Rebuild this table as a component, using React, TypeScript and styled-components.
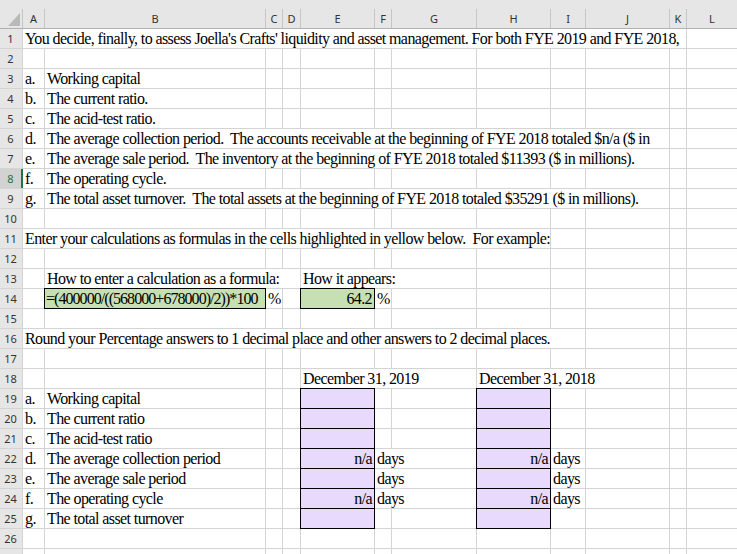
import React from "react";
import styled, { createGlobalStyle, css } from "styled-components";

const COLS =
  "22px 21px 220px 16px 17px 73px 16px 84px 73px 34px 83px 16px 1fr";
const LETTERS = ["A", "B", "C", "D", "E", "F", "G", "H", "I", "J", "K", "L"];

const GlobalStyle = createGlobalStyle`
  html, body { margin: 0; padding: 0; overflow: hidden; background: #ffffff; }
  #root { width: 737px; height: 554px; overflow: hidden; }
`;

const Sheet = styled.div`
  display: grid;
  grid-template-columns: ${COLS};
  grid-template-rows: 28px;
  grid-auto-rows: 19px;
  gap: 1px;
  width: 737px;
  background: #d4d4d4;
  font-family: "Liberation Serif", "Times New Roman", serif;
  font-size: 16px;
  letter-spacing: -0.6px;
  color: #000;
`;

const HeaderBar = styled.div`
  grid-column: 1 / -1;
  background: #e6e6e6;
  padding-top: 9px;
  box-shadow: 0 1px 0 #b1b1b1;
`;

const HeaderGrid = styled.div`
  display: grid;
  grid-template-columns: ${COLS};
  gap: 1px;
  height: 19px;
  background: #c6c6c6;
`;

const Corner = styled.div`
  background: #e6e6e6;
  display: flex;
  align-items: flex-end;
  justify-content: flex-end;
  padding: 0 2px 2px 0;
`;

const headerText = css`
  font-family: "Noto Sans", "Liberation Sans", sans-serif;
  font-size: 11px;
  letter-spacing: 0;
  line-height: 1;
  color: #333;
  display: flex;
  align-items: center;
  justify-content: center;
`;

const ColHeader = styled.div`
  ${headerText};
  background: #e6e6e6;
`;

const RowHeader = styled.div<{ $selected?: boolean }>`
  ${headerText};
  padding-right: 1px;
  background: ${(p) => (p.$selected ? "#d2d2d2" : "#e6e6e6")};
  color: ${(p) => (p.$selected ? "#217346" : "#333")};
  box-shadow: ${(p) =>
    p.$selected ? "inset -1px 0 0 #217346, 1px 0 0 #217346" : "none"};
`;

type Fill = "green" | "purple";

const FILLS: Record<Fill, string> = {
  green: "#c6e0b4",
  purple: "#e8dafc",
};

const Cell = styled.div<{
  $span: number;
  $align: "left" | "right";
  $fill?: Fill;
  $tight?: boolean;
}>`
  grid-column: span ${(p) => p.$span};
  background: ${(p) => (p.$fill ? FILLS[p.$fill] : "#ffffff")};
  box-shadow: ${(p) => (p.$fill ? "0 0 0 1px #000" : "none")};
  padding: 0 2px;
  line-height: 19px;
  white-space: pre;
  overflow: hidden;
  text-align: ${(p) => p.$align};
  ${(p) => p.$tight && "letter-spacing: -0.95px; padding: 0 1px;"}
`;

type CellSpec = {
  col: number;
  text?: string;
  span?: number;
  align?: "left" | "right";
  fill?: Fill;
  tight?: boolean;
};

const A = 0, B = 1, C = 2, E = 4, F = 5, H = 7, I = 8;

const item = (letter: string, label: string): CellSpec[] => [
  { col: A, text: letter },
  { col: B, text: label },
];

const answerRow = (
  letter: string,
  label: string,
  value?: string,
  unit?: string
): CellSpec[] => [
  ...item(letter, label),
  { col: E, text: value, align: "right", fill: "purple" },
  ...(unit ? [{ col: F, text: unit, span: 2 }] : []),
  { col: H, text: value, align: "right", fill: "purple" },
  ...(unit ? [{ col: I, text: unit }] : []),
];

const ROWS: Record<number, CellSpec[]> = {
  1: [
    {
      col: A,
      span: 11,
      text: "You decide, finally, to assess Joella's Crafts' liquidity and asset management. For both FYE 2019 and FYE 2018,",
    },
  ],
  3: item("a.", "Working capital"),
  4: item("b.", "The current ratio."),
  5: item("c.", "The acid-test ratio."),
  6: [
    { col: A, text: "d." },
    {
      col: B,
      span: 9,
      text: "The average collection period.  The accounts receivable at the beginning of FYE 2018 totaled $n/a ($ in",
    },
  ],
  7: [
    { col: A, text: "e." },
    {
      col: B,
      span: 9,
      text: "The average sale period.  The inventory at the beginning of FYE 2018 totaled $11393 ($ in millions).",
    },
  ],
  8: item("f.", "The operating cycle."),
  9: [
    { col: A, text: "g." },
    {
      col: B,
      span: 9,
      text: "The total asset turnover.  The total assets at the beginning of FYE 2018 totaled $35291 ($ in millions).",
    },
  ],
  11: [
    {
      col: A,
      span: 8,
      text: "Enter your calculations as formulas in the cells highlighted in yellow below.  For example:",
    },
  ],
  13: [
    { col: B, span: 3, text: "How to enter a calculation as a formula:" },
    { col: E, span: 3, text: "How it appears:" },
  ],
  14: [
    {
      col: B,
      text: "=(400000/((568000+678000)/2))*100",
      fill: "green",
      tight: true,
    },
    { col: C, text: "%" },
    { col: E, text: "64.2", align: "right", fill: "green" },
    { col: F, text: "%" },
  ],
  16: [
    {
      col: A,
      span: 9,
      text: "Round your Percentage answers to 1 decimal place and other answers to 2 decimal places.",
    },
  ],
  18: [
    { col: E, span: 3, text: "December 31, 2019" },
    { col: H, span: 3, text: "December 31, 2018" },
  ],
  19: answerRow("a.", "Working capital"),
  20: answerRow("b.", "The current ratio"),
  21: answerRow("c.", "The acid-test ratio"),
  22: answerRow("d.", "The average collection period", "n/a", "days"),
  23: answerRow("e.", "The average sale period", "", "days"),
  24: answerRow("f.", "The operating cycle", "n/a", "days"),
  25: answerRow("g.", "The total asset turnover"),
};

const ROW_COUNT = 27;
const SELECTED_ROW = 8;

function CornerTriangle() {
  return (
    <svg width="12" height="13" viewBox="0 0 12 13">
      <polygon points="12,0 12,13 0,13" fill="#b9b9b9" />
    </svg>
  );
}

function SheetRow({ row }: { row: number }) {
  const specs = ROWS[row] ?? [];
  const cells: React.ReactNode[] = [];
  let col = 0;
  while (col < LETTERS.length) {
    const spec = specs.find((s) => s.col === col);
    const span = spec?.span ?? 1;
    cells.push(
      <Cell
        key={col}
        $span={span}
        $align={spec?.align ?? "left"}
        $fill={spec?.fill}
        $tight={spec?.tight}
      >
        {spec?.text}
      </Cell>
    );
    col += span;
  }
  return (
    <>
      <RowHeader $selected={row === SELECTED_ROW}>{row}</RowHeader>
      {cells}
    </>
  );
}

export default function App() {
  return (
    <>
      <GlobalStyle />
      <Sheet>
        <HeaderBar>
          <HeaderGrid>
            <Corner>
              <CornerTriangle />
            </Corner>
            {LETTERS.map((l) => (
              <ColHeader key={l}>{l}</ColHeader>
            ))}
          </HeaderGrid>
        </HeaderBar>
        {Array.from({ length: ROW_COUNT }, (_, i) => (
          <SheetRow key={i + 1} row={i + 1} />
        ))}
      </Sheet>
    </>
  );
}
